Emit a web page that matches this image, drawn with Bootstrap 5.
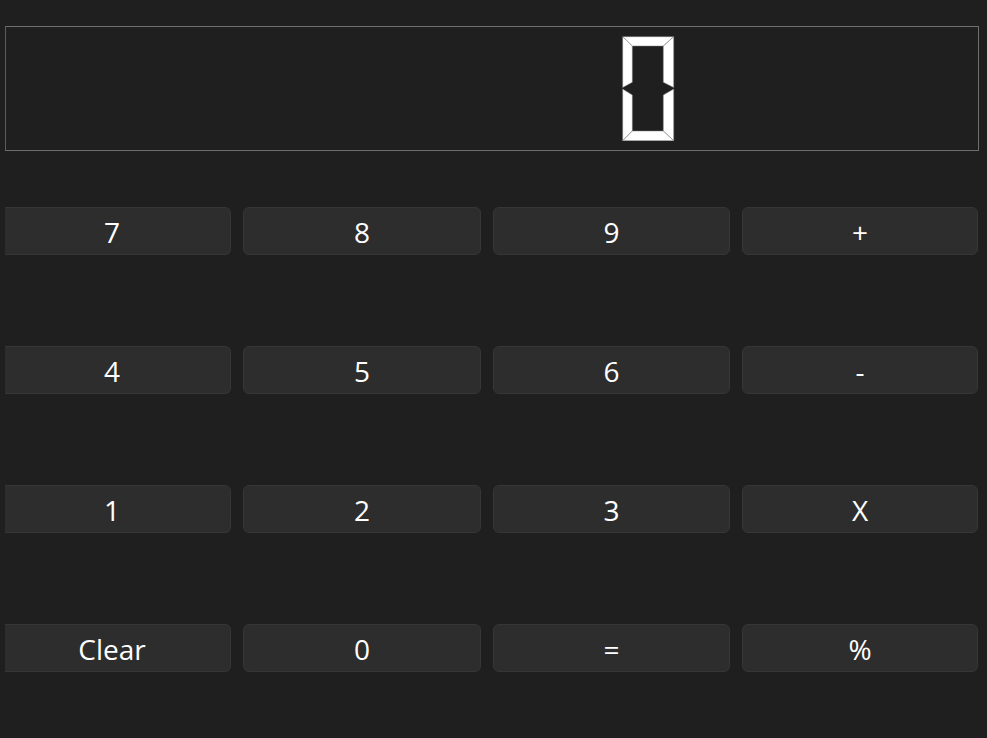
<!DOCTYPE html>
<html lang="en">
<head>
<meta charset="utf-8">
<title>Calculator</title>
<link href="https://cdn.jsdelivr.net/npm/bootstrap@5.3.0/dist/css/bootstrap.min.css" rel="stylesheet">
<style>
html, body { height: 100%; }
body { background: #1f1f1f; color: #fff; font-family: "Open Sans", "Noto Sans", sans-serif; overflow: hidden; }
.calc-root { padding: 26px 8px 0 5px; }
.lcd-box { height: 125px; border: 1px solid #6e6e6e; border-left-color: #5c5c5c; margin-bottom: 56px; padding-left: 616px; }
.lcd-digit { width: 54px; height: 105px; display: block; }
.lcd-digit polygon { fill: #fff; stroke: #808080; stroke-width: .5; stroke-linejoin: round; }
.key-grid { display: grid; grid-template-columns: 226px 238px 237px 236px; column-gap: 12px; row-gap: 91px; }
.key-btn { height: 48px; padding: 1px 0 0; font-size: 28px; font-weight: 400; line-height: 1; background: #2d2d2d; border: 1px solid #363636; color: #fff; border-radius: 6px; }
.key-btn:hover, .key-btn:active { background: #2d2d2d !important; border-color: #363636 !important; color: #fff !important; }
.key-edge { border-left: 0; border-top-left-radius: 0; border-bottom-left-radius: 0; padding-right: 11px; }
</style>
</head>
<body>
<main class="calc-root">
  <div class="lcd-box d-flex align-items-center">
    <svg class="lcd-digit" viewBox="0 0 54 105" role="img" aria-label="0">
      <polygon points="0.7,0.7 51.7,0.7 41.3,10 10.3,10"/>
      <polygon points="0.7,0.7 10.3,10 10.3,46.3 0.7,51.5"/>
      <polygon points="51.7,0.7 41.3,10 41.3,46.3 51.7,51.5"/>
      <polygon points="0.7,53 10.3,59 10.3,95 0.7,104.7"/>
      <polygon points="51.7,53 41.3,59 41.3,95 51.7,104.7"/>
      <polygon points="10.3,95 41.3,95 51.7,104.7 0.7,104.7"/>
    </svg>
  </div>
  <div class="key-grid">
    <button type="button" class="btn key-btn key-edge">7</button>
    <button type="button" class="btn key-btn">8</button>
    <button type="button" class="btn key-btn">9</button>
    <button type="button" class="btn key-btn">+</button>
    <button type="button" class="btn key-btn key-edge">4</button>
    <button type="button" class="btn key-btn">5</button>
    <button type="button" class="btn key-btn">6</button>
    <button type="button" class="btn key-btn">-</button>
    <button type="button" class="btn key-btn key-edge">1</button>
    <button type="button" class="btn key-btn">2</button>
    <button type="button" class="btn key-btn">3</button>
    <button type="button" class="btn key-btn">X</button>
    <button type="button" class="btn key-btn key-edge">Clear</button>
    <button type="button" class="btn key-btn">0</button>
    <button type="button" class="btn key-btn">=</button>
    <button type="button" class="btn key-btn">%</button>
  </div>
</main>
<script src="https://cdn.jsdelivr.net/npm/bootstrap@5.3.0/dist/js/bootstrap.bundle.min.js"></script>
</body>
</html>
